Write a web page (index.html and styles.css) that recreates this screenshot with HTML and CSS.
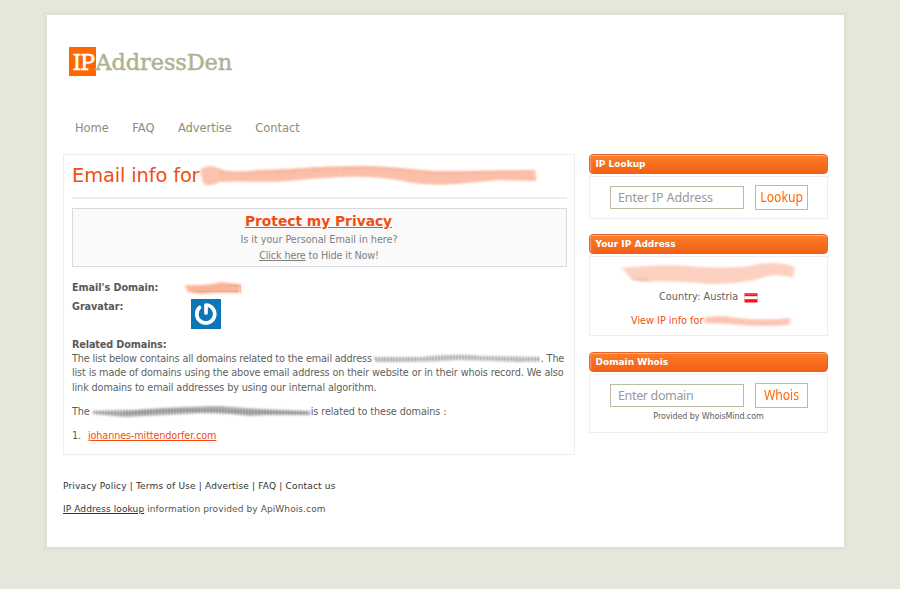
FILE: index.html
```html
<!DOCTYPE html>
<html lang="en">
<head>
<meta charset="utf-8">
<title>IPAddressDen</title>
<link rel="stylesheet" href="styles.css">
</head>
<body>
<svg class="defs" width="0" height="0" aria-hidden="true">
  <defs>
    <filter id="soft" x="-5%" y="-30%" width="110%" height="160%"><feGaussianBlur stdDeviation="1.6 1.1"/></filter>
    <filter id="fine" x="-5%" y="-30%" width="110%" height="160%"><feGaussianBlur stdDeviation="0.4 0.9"/></filter>
    <pattern id="ribs" width="3" height="40" patternUnits="userSpaceOnUse"><path d="M1 0V40" stroke="#f58a68" stroke-width="1" opacity=".25"/></pattern>
    <pattern id="grayribs" width="3" height="20" patternUnits="userSpaceOnUse"><path d="M1 0V20" stroke="#777" stroke-width="1.2" opacity=".4"/></pattern>
  </defs>
</svg>
<div class="page">
  <header class="logo"><span class="logo-ip">IP</span><span class="logo-name">AddressDen</span></header>
  <nav class="nav"><a>Home</a><a>FAQ</a><a>Advertise</a><a>Contact</a></nav>
  <div class="columns">
    <main class="panel">
      <h1 class="title"><span>Email info for</span><svg class="smear" width="342" height="28" viewBox="0 0 342 28">
        <g filter="url(#soft)"><path d="M2 8Q10 1 20 6Q32 12 60 8C100 7 118 4 160 4C205 4 220 10 260 9L337 8L338 19L300 18C260 22 238 25 210 20C170 12 138 15 100 18C62 22 50 18 22 20Q8 26 5 21Z" fill="#fbc3af"/><path d="M22 10C80 13 132 5 172 6S230 13 260 11L334 9" fill="none" stroke="#f28b6c" opacity=".4"/></g>
        <path filter="url(#fine)" d="M20 8Q32 12 60 8C100 7 118 4 160 4C205 4 220 10 260 9L338 8V19L300 18C260 22 238 25 210 20C170 12 138 15 100 18C62 22 50 17 22 19Z" fill="url(#ribs)"/></svg></h1>
      <section class="privacy">
        <a class="protect">Protect my Privacy</a>
        <p class="ask">Is it your Personal Email in here?</p>
        <p class="hide"><u>Click here</u> to Hide it Now!</p>
      </section>
      <div class="field"><b class="label">Email's Domain:</b><svg class="domain-smear" width="64" height="18" viewBox="0 0 64 18">
        <g filter="url(#soft)"><path d="M2 6Q24 7 38 3Q54 5 58 5L57 14Q34 13 18 15L5 13Z" fill="#fab79e"/></g><path filter="url(#fine)" d="M2 6Q24 7 38 4L57 6V14Q30 13 4 14Z" fill="url(#ribs)"/><path d="M45 6.500H57.500V14M12 12.500L56 12.500" fill="none" stroke="#f08460" opacity=".4"/></svg></div>
      <div class="field grav"><b class="label">Gravatar:</b><svg class="gravatar" width="30" height="30" viewBox="0 0 30 30">
        <path d="M0 0H30V30H0Z" fill="#0c76b7"/><path d="M8.600 8.400A9 9 0 1 0 15 6V14" fill="none" stroke="#fff" stroke-width="3.700" stroke-linecap="round" stroke-linejoin="round"/></svg></div>
      <h2 class="related">Related Domains:</h2>
      <p class="line first"><span>The list below contains all domains related to the email address</span><svg class="smear" width="169" height="12" viewBox="0 0 169 12"><g filter="url(#fine)"><path d="M1 4L50 4Q85 0 110 3L168 4V8L145 9Q115 7 85 7Q50 9 4 9Z" fill="#ccc"/><path d="M1 4L50 4Q85 0 110 3L168 4V9L145 9Q115 7 85 7Q50 10 4 9Z" fill="url(#grayribs)"/></g></svg><span>. The</span></p>
      <p class="line"><span>list is made of domains using the above email address on their website or in their whois record. We also</span></p>
      <p class="line"><span>link domains to email addresses by using our internal algorithm.</span></p>
      <p class="line relation"><span>The</span><svg class="smear" width="221" height="14" viewBox="0 0 221 14"><g filter="url(#soft)"><path d="M2 6L45 5Q80 2 130 1Q160 4 220 6V10Q180 9 160 11Q140 8 110 8L35 12L4 9Z" fill="#b4b4b4"/><path d="M35 8Q100 3 150 7L216 8" fill="none" stroke="#888"/></g><path filter="url(#fine)" d="M2 6L45 5Q80 3 130 2Q160 5 220 6V10L160 10Q130 8 110 8L35 11L4 9Z" fill="url(#grayribs)"/></svg><span>is related to these domains :</span></p>
      <p class="line result"><span class="num">1.</span><a class="link">johannes-mittendorfer.com</a></p>
    </main>
    <aside class="side">
      <section class="widget w1"><h3>IP Lookup</h3><div class="box">
        <div class="form"><div class="input">Enter IP Address</div><div class="button"><span>Lookup</span></div></div></div></section>
      <section class="widget w2"><h3>Your IP Address</h3><div class="box">
        <svg class="ip-smear" width="180" height="26" viewBox="0 0 180 26"><g filter="url(#soft)"><path d="M3 7Q50 2 80 6Q125 8 140 3Q160 0 176 6L174 17Q160 12 148 15Q128 23 90 23Q45 19 23 21L12 18Z" fill="#fcd3c4"/><path d="M12 18L30 19" fill="none" stroke="#f5a084"/></g><path filter="url(#fine)" d="M5 8Q50 3 80 6Q125 8 140 3L172 6V16Q155 12 148 15Q128 21 90 21Q45 19 23 20Z" fill="url(#ribs)" opacity=".5"/></svg>
        <p class="country"><span>Country: Austria</span><svg class="flag" width="14" height="10" viewBox="0 0 14 10"><path d="M0.500 0H13.500V9.500H0.500Z" fill="#f5131b"/><path d="M0.500 3.200H13.500V6.200H0.500Z" fill="#fff"/><path d="M1 1H13" stroke="#ff7377"/></svg></p>
        <p class="view"><span>View IP info for</span><svg class="smear" width="90" height="14" viewBox="0 0 90 14"><g filter="url(#soft)"><path d="M1 4Q15 0 34 4Q60 7 88 4L86 11Q60 13 38 11Q20 9 2 9Z" fill="#fccab8"/></g><path filter="url(#fine)" d="M1 4Q15 2 34 4Q60 7 86 4V10Q60 12 38 10L2 9Z" fill="url(#ribs)"/></svg></p></div></section>
      <section class="widget w3"><h3>Domain Whois</h3><div class="box">
        <div class="form"><div class="input domain">Enter domain</div><div class="button"><span>Whois</span></div></div>
        <p class="provided">Provided by WhoisMind.com</p></div></section>
    </aside>
  </div>
  <footer class="footer">
    <p class="links">Privacy Policy | Terms of Use | Advertise | FAQ | Contact us</p>
    <p class="info"><u>IP Address lookup</u> information provided by ApiWhois.com</p>
  </footer>
</div>
</body>
</html>
```
FILE: styles.css
```css
* { box-sizing: border-box; }
html, body { margin: 0; height: 589px; overflow: hidden; }
body { padding: 12px 0 0 44px; background: #e6e6da; font: 9.7px/14.3px "DejaVu Sans", sans-serif; letter-spacing: -.13px; color: #606060; white-space: nowrap; }
p, h1, h2, h3 { margin: 0; }
svg { display: block; flex: none; }
.defs { position: absolute; }
.page { width: 803px; height: 538px; border: 3px solid #e1e2d3; background: #fff; padding: 32px 16px 0; }
.logo { display: flex; height: 29px; margin-left: 6px; font: 22.5px/30px "DejaVu Serif", serif; letter-spacing: -.15px; color: #afb192; -webkit-text-stroke: .45px; }
.logo-ip { width: 26.5px; background: #ff6700; color: #fff; padding-left: 3.5px; letter-spacing: -1.3px; }
.nav { display: flex; gap: 23.5px; margin: 42px 0 0 12px; height: 21px; font-size: 11.5px; letter-spacing: -.05px; line-height: 21px; color: #8d8e78; }
.columns { display: flex; gap: 14px; align-items: flex-start; margin-top: 15px; }
.panel { width: 512px; height: 301px; border: 1px solid #eee; padding: 0 7px 0 8px; }
.title { display: flex; align-items: center; height: 44px; border-bottom: 2px solid #eee; color: #f04e12; font-size: 19.4px; font-weight: normal; letter-spacing: -.12px; }
.title .smear { margin-left: -1px; }
.privacy { height: 59px; margin-top: 9px; border: 1px solid #d8dce0; background: #fafafa; text-align: center; color: #808080; letter-spacing: -.04px; }
.protect { display: block; height: 22px; line-height: 25px; margin-left: -2px; font-size: 13.8px; font-weight: bold; letter-spacing: 0; color: #f04e12; text-decoration: underline; }
.ask, .hide { height: 16px; line-height: 17px; margin-left: -1px; }
.hide { letter-spacing: -.15px; }
.field { display: flex; height: 19px; line-height: 19px; margin-top: 11px; color: #595959; letter-spacing: -.07px; }
.label { width: 111px; }
.domain-smear { margin-top: 1px; }
.grav { height: 31px; margin-top: 0; line-height: 20px; }
.grav .label { width: 119px; }
.gravatar { margin-top: 2px; }
.related { margin-top: 10px; line-height: 14px; font-size: 9.7px; color: #595959; }
.line { display: flex; align-items: center; height: 14.3px; }
.first { letter-spacing: -.16px; }
.relation { margin-top: 10px; letter-spacing: -.1px; }
.result { margin-top: 10px; }
.num { width: 16px; }
.link { color: #f04e12; text-decoration: underline; }
.side { width: 239px; }
.widget h3 { height: 19.5px; border: 1px solid #e5642a; border-radius: 4px; padding-left: 5.5px; background: linear-gradient(#ff7e28, #f26016); box-shadow: inset 0 1px #ffad7c, inset 1px 0 #ff9b5f; color: #fff; font-size: 9px; line-height: 18.5px; letter-spacing: 0; }
.box { margin-top: 2.5px; border: 1px solid #eee; }
.w1 .box { height: 43px; padding-top: 8px; }
.w2 { margin-top: 15px; }
.w2 .box { height: 80px; padding-top: 4px; }
.w3 { margin-top: 16px; }
.w3 .box { height: 59px; padding-top: 8px; }
.form { display: flex; align-items: center; gap: 11px; height: 25px; margin-left: 20px; }
.input { width: 134px; height: 23px; border: 1px solid #bbbda2; padding-left: 7px; font: 12.5px/22px "Noto Sans", sans-serif; color: #999; }
.domain { letter-spacing: -.35px; }
.button { display: flex; justify-content: center; width: 53px; height: 25px; border: 1px solid #bbbda2; font: 13.5px/23px "Noto Sans", sans-serif; letter-spacing: 0; color: #ff6700; }
.button span { transform: scaleX(.9); }
.ip-smear { margin-left: 29px; }
.country { display: flex; align-items: center; height: 17px; margin: 2px 0 0 69px; letter-spacing: .05px; }
.flag { margin-left: 6px; }
.view { display: flex; align-items: center; height: 16px; margin: 7px 0 0 41px; color: #f04e12; letter-spacing: 0; }
.provided { text-align: center; font-size: 8px; line-height: 18px; letter-spacing: -.1px; }
.footer { margin-top: 24px; font-size: 9px; color: #333; }
.links { letter-spacing: .17px; }
.info { margin-top: 9px; letter-spacing: .1px; color: #555; }
.info u { color: #333; }
```
